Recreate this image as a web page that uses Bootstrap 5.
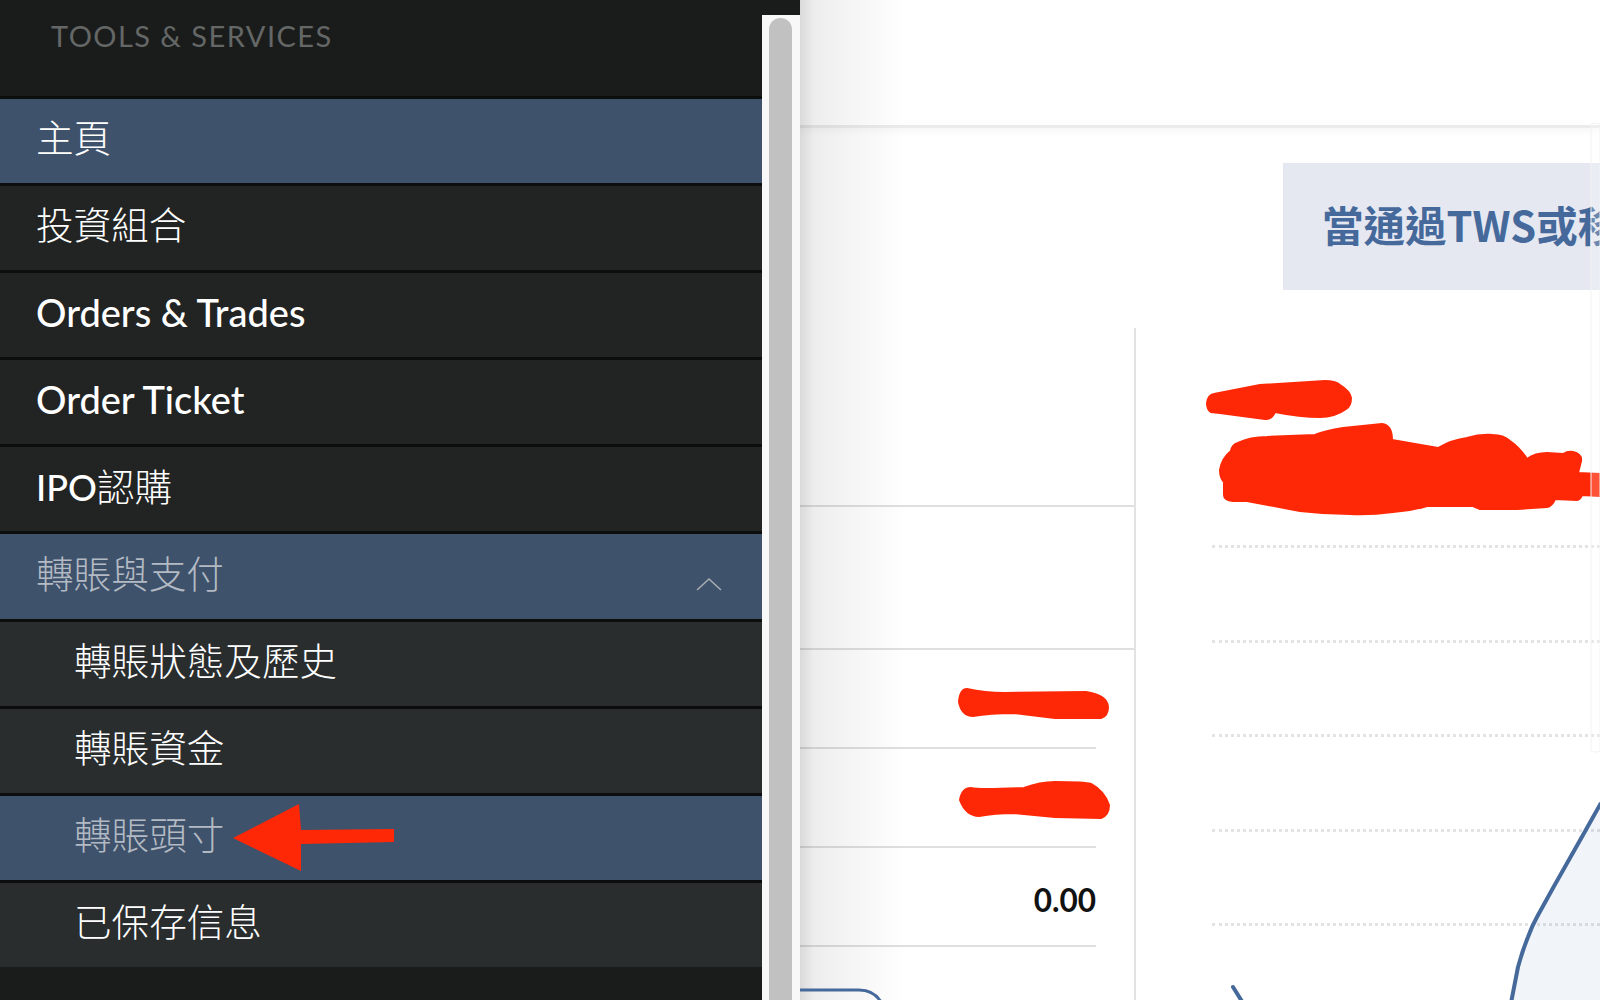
<!DOCTYPE html>
<html lang="zh-Hant">
<head>
    <meta charset="UTF-8">
    <title>Tools &amp; Services</title>
    <link href="https://cdn.jsdelivr.net/npm/bootstrap@5.3.0/dist/css/bootstrap.min.css" rel="stylesheet">
    <style>
        html, body { height: 100%; }
        body { overflow: hidden; background: #fff; font-family: Lato, "Noto Sans CJK TC", sans-serif; }
        .page-wrap { height: 1000px; position: relative; }

        /* left menu */
        .side-wrap { width: 800px; background: #1a1c1c; }
        .side-menu { width: 762px; }
        .side-title { height: 96px; padding: 19px 0 0 51px; font-size: 29px; line-height: 34px; letter-spacing: 1.45px; color: #646766; }
        .menu-item { height: 87.1px; padding: 0 0 5px 36px; background: #222424; border-top: 3px solid #0c0d0d; color: #fff; font-size: 37.6px; font-weight: 300; }
        .menu-item.lat { font-weight: 500; font-size: 38px; }
        .menu-item.lat-short { font-size: 36px; }
        .cjk-lite { font-weight: 300; font-size: 37.6px; }
        .menu-item.sub { padding-left: 74px; background: #2a2d2e; }
        .menu-item.on { background: #3f526b; }
        .menu-item.dim { color: #b3bac3; }
        .menu-chev { margin-right: 40px; margin-top: 19px; }
        .side-track { width: 38px; margin-top: 15px; background: #f8f8f8; padding: 3px 8px 0 7px; }
        .side-thumb { height: 100%; background: #c1c1c1; border-radius: 12px 12px 0 0; }

        /* right content */
        .top-strip { height: 128px; flex: none; border-bottom: 3px solid #ebebeb; box-shadow: 0 3px 8px rgba(0,0,0,.04); }
        .note-wrap { padding: 35px 0 0 483px; flex: none; }
        .note-box { height: 127px; padding: 0 0 4px 39px; background: #e5e8f1; color: #45699b; font-family: "Noto Sans CJK TC", sans-serif; font-size: 41.5px; font-weight: 700; white-space: nowrap; overflow: hidden; }
        .split-row { margin-top: 38px; min-height: 0; }
        .left-pane { width: 336px; flex: none; border-right: 2px solid #e2e2e2; }
        .pane-gap { height: 179px; border-bottom: 2px solid #dfdfdf; }
        .pane-gap.two { height: 143px; }
        .stat-row { height: 99px; margin-right: 38px; padding-top: 9px; border-bottom: 2px solid #dfdfdf; font-size: 31.5px; font-weight: 700; color: #111; }
        .chart-pane { padding: 217px 0 0 76px; position: relative; min-width: 0; }
        .grid-line { height: 94.6px; flex: none; border-top: 3px dotted #e3e3e3; }
        .chart-svg { position: absolute; left: 0; top: 0; width: 464px; height: 672px; }

        .edge-shade { position: absolute; left: 800px; top: 0; width: 110px; height: 1000px; pointer-events: none; background: linear-gradient(to right, rgba(0,0,0,.15) 0, rgba(0,0,0,.07) 14px, rgba(0,0,0,.04) 50px, rgba(0,0,0,0) 108px); }
        .marks { position: absolute; left: 0; top: 0; pointer-events: none; }
    </style>
</head>
<body>

<div class="page-wrap d-flex">
    <!-- menu -->
    <div class="side-wrap d-flex flex-none">
        <div class="side-menu d-flex flex-column">
            <div class="side-title">TOOLS &amp; SERVICES</div>
            <div class="menu-item on d-flex align-items-center">主頁</div>
            <div class="menu-item d-flex align-items-center">投資組合</div>
            <div class="menu-item lat d-flex align-items-center">Orders &amp; Trades</div>
            <div class="menu-item lat d-flex align-items-center">Order Ticket</div>
            <div class="menu-item lat lat-short d-flex align-items-center"><span>IPO<span class="cjk-lite">認購</span></span></div>
            <div class="menu-item on dim d-flex align-items-center justify-content-between">
                <span>轉賬與支付</span>
                <svg class="menu-chev" width="26" height="14" viewBox="0 0 26 14"><path d="M1 13 L13 2 L25 13" fill="none" stroke="#a8acb0" stroke-width="1.6"/></svg>
            </div>
            <div class="menu-item sub d-flex align-items-center">轉賬狀態及歷史</div>
            <div class="menu-item sub d-flex align-items-center">轉賬資金</div>
            <div class="menu-item sub on dim d-flex align-items-center">轉賬頭寸</div>
            <div class="menu-item sub d-flex align-items-center">已保存信息</div>
        </div>
        <div class="side-track"><div class="side-thumb"></div></div>
    </div>

    <!-- content -->
    <div class="flex-grow-1 d-flex flex-column overflow-hidden">
        <div class="top-strip"></div>
        <div class="note-wrap">
            <div class="note-box d-flex align-items-center">當通過TWS或移動應用程式</div>
        </div>
        <div class="split-row d-flex flex-grow-1">
            <div class="left-pane">
                <div class="pane-gap"></div>
                <div class="pane-gap two"></div>
                <div class="stat-row"></div>
                <div class="stat-row"></div>
                <div class="stat-row d-flex align-items-center justify-content-end">0.00</div>
            </div>
            <div class="chart-pane flex-grow-1 d-flex flex-column">
                <div class="grid-line"></div>
                <div class="grid-line"></div>
                <div class="grid-line"></div>
                <div class="grid-line"></div>
                <div class="grid-line"></div>
                <svg class="chart-svg" viewBox="1136 328 464 672">
                    <path d="M1601 803 L1583 835 L1553 888 L1537 917 Q1532 926 1528 937 Q1522 952 1518 967 L1511 1003 L1601 1003 Z" fill="#45699b" fill-opacity=".075"/>
                    <path d="M1601 803 L1583 835 L1553 888 L1537 917 Q1532 926 1528 937 Q1522 952 1518 967 L1511 1003" fill="none" stroke="#45699b" stroke-width="4"/>
                    <path d="M1233 987 L1243 1003" fill="none" stroke="#45699b" stroke-width="4" stroke-linecap="round"/>
                </svg>
            </div>
        </div>
    </div>

    <div class="edge-shade"></div>

    <!-- hand drawn red marks over the screenshot -->
    <svg class="marks" width="1600" height="1000" viewBox="0 0 1600 1000">
        <path d="M800 990 H859 Q874 990 881 1002" fill="none" stroke="#45699b" stroke-width="3"/>
        <path d="M233 838 L299 804 L301 830 L394 829 L394 842 L301 844 L301 871 Z" fill="#ff2806"/>
        <g fill="#ff2806" stroke="#ff2806" stroke-width="2" stroke-linejoin="round">
            <path d="M1207 403 Q1208 395 1214 394 L1260 385 L1325 381 Q1335 381 1340 385 Q1350 391 1351 398 Q1351 406 1346 409 Q1335 417 1320 417 Q1300 417 1275 412 Q1271 420 1265 419 L1220 413 L1211 412 Q1207 410 1207 403 Z"/>
            <path d="M1220 470 Q1222 458 1231 451 Q1232 445 1238 443 Q1250 437 1267 437 L1315 435 Q1325 431 1343 428 L1382 424 Q1392 425 1392 440 L1438 448 Q1452 440 1467 438 Q1480 434 1493 435 Q1503 435 1510 441 Q1520 448 1527 459 Q1535 453 1547 453 L1563 454 Q1568 451 1573 452 Q1582 454 1581 461 L1578 473 L1600 474 L1600 496 L1582 495 Q1580 500 1577 500 L1555 499 Q1552 506 1547 507 L1517 509 L1480 509 L1473 506 L1427 506 Q1410 511 1393 512 Q1370 515 1350 514 Q1325 514 1300 511 L1247 501 L1233 501 Q1224 500 1224 495 L1224 482 Q1220 478 1220 470 Z"/>
            <path d="M959 702 Q960 689 967 689 Q985 693 1004 693 L1086 692 Q1107 695 1108 707 Q1108 716 1101 718 L1055 718 L1014 713 Q990 713 973 716 Q962 716 959 702 Z"/>
            <path d="M960 800 Q962 788 971 788 Q978 790 1024 788 Q1040 782 1055 782 Q1085 782 1091 784 Q1104 791 1109 805 Q1109 815 1101 818 L1055 817 L1014 813 Q995 813 979 816 Q966 816 960 800 Z"/>
        </g>
        <rect x="1591" y="123" width="9" height="629" rx="3" fill="#fff" fill-opacity=".2" stroke="#f3f3f3"/>
    </svg>
</div>

<script src="https://cdn.jsdelivr.net/npm/bootstrap@5.3.0/dist/js/bootstrap.bundle.min.js"></script>
</body>
</html>
